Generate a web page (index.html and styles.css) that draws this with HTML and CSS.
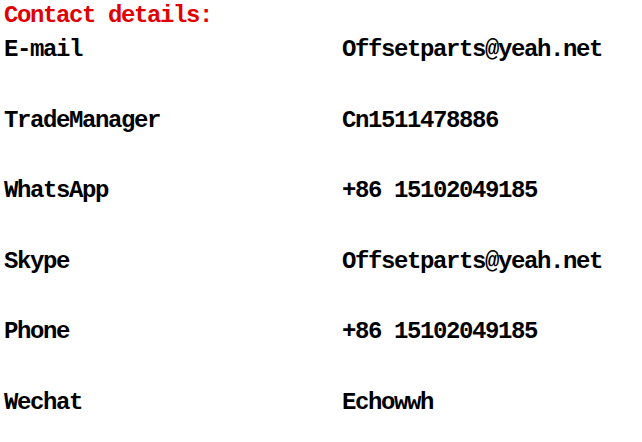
FILE: index.html
```html
<!DOCTYPE html>
<html>
  <head>
    <title>Contact details</title>
    <link rel="stylesheet" href="styles.css">
  </head>
  <body>
    <h1 class="title">Contact details:</h1>
    <div class="contacts">
      <div class="label">E-mail</div>
      <div class="value">Offsetparts@yeah.net</div>
      <div class="label">TradeManager</div>
      <div class="value">Cn1511478886</div>
      <div class="label">WhatsApp</div>
      <div class="value">+86 15102049185</div>
      <div class="label">Skype</div>
      <div class="value">Offsetparts@yeah.net</div>
      <div class="label">Phone</div>
      <div class="value">+86 15102049185</div>
      <div class="label">Wechat</div>
      <div class="value">Echowwh</div>
    </div>
  </body>
</html>
```

FILE: styles.css
```css
body {
  margin: 0;
  padding: 2px 0 0 4px;
  font-family: "Liberation Mono", monospace;
  font-weight: bold;
  font-size: 24px;
  letter-spacing: -1.4px;
  color: #000;
  background: #fff;
}
.title {
  margin: 0;
  font-size: 24px;
  line-height: 28px;
  color: #e00000;
}
.contacts {
  display: grid;
  grid-template-columns: 338px auto;
  grid-auto-rows: 70.6px;
  margin-top: 6px;
}
.label,
.value {
  line-height: 28px;
}
```
